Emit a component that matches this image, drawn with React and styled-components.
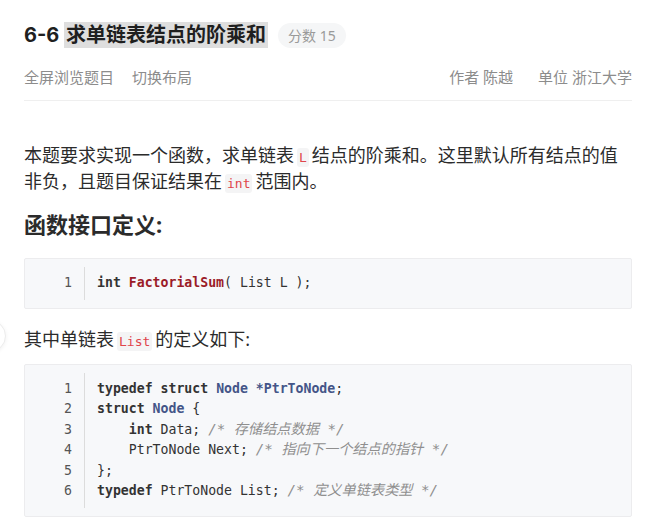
import React from "react";
import styled, { createGlobalStyle } from "styled-components";

const Global = createGlobalStyle`
  html, body { margin: 0; padding: 0; background: #fff; }
  body { font-family: "Noto Sans", "Noto Sans CJK SC", sans-serif; color: #333; }
`;

const Page = styled.div`
  position: relative;
  padding: 21px 28px 0 24px;
  width: 608px;
`;

const TitleRow = styled.div`
  display: flex;
  align-items: center;
  gap: 10px;
`;

const Title = styled.h1`
  margin: 0;
  font-size: 20px;
  line-height: 28px;
  font-weight: 700;
  color: #1f1f1f;
  font-family: Inter, "Noto Sans CJK SC", sans-serif;
`;

const Highlight = styled.span`
  background: #dedede;
  padding: 1px 2px;
`;

const Badge = styled.span`
  display: inline-flex;
  align-items: center;
  height: 25px;
  padding: 0 10px;
  border-radius: 13px;
  background: #f5f6f7;
  color: #9a9a9a;
  font-size: 14px;
`;

const SubNav = styled.div`
  display: flex;
  justify-content: space-between;
  align-items: center;
  margin-top: 17px;
  padding-bottom: 12px;
  border-bottom: 1px solid #efefef;
  font-size: 15px;
  line-height: 22px;
  color: #8c8c8c;
`;

const NavGroup = styled.div`
  display: flex;
  gap: ${(p) => p.$gap}px;
`;

const Para = styled.p`
  margin: ${(p) => p.$mt}px 0 0;
  font-size: 18px;
  line-height: 26px;
  color: #2b2b2b;
`;

const Heading = styled.h2`
  margin: 14px 0 0;
  font-size: 22px;
  line-height: 32px;
  font-weight: 700;
  color: #2b2b2b;
`;

const InlineCode = styled.code`
  font-family: "DejaVu Sans Mono", "Liberation Mono", monospace;
  font-size: 13px;
  line-height: 1;
  color: #e0454b;
  background: #f4f4f5;
  padding: 2px 2px;
  margin: 0 3px;
  border-radius: 3px;
`;

const Block = styled.div`
  margin-top: ${(p) => p.$mt}px;
  display: flex;
  padding: 8px 0;
  background: #f7f8fa;
  border: 1px solid #ececee;
  border-radius: 2px;
  font-family: "DejaVu Sans Mono", "Liberation Mono", "Noto Sans CJK SC", monospace;
  font-size: 13.2px;
  line-height: 20.5px;
`;

const Gutter = styled.div`
  width: 47px;
  padding: 6px 12px 6px 0;
  text-align: right;
  color: #555;
  border-right: 1px solid #dcdcdc;
`;

const Lines = styled.div`
  padding: 6px 12px;
  color: #333;
  white-space: pre;
`;

const Line = styled.div`
  height: 20.5px;
  overflow: visible;
`;

const Tok = styled.span`
  font-weight: ${(p) => (p.$k === "kw" || p.$k === "fn" || p.$k === "type" ? 700 : 400)};
  color: ${(p) =>
    p.$k === "fn" ? "#9b1c28" : p.$k === "type" ? "#445588" : p.$k === "cm" ? "#8f8f8f" : "#333"};
  font-style: ${(p) => (p.$k === "cm" ? "italic" : "normal")};
  font-size: ${(p) => (p.$k === "cm" ? "14.2px" : "inherit")};
  line-height: ${(p) => (p.$k === "cm" ? "1" : "inherit")};
`;

const Floater = styled.div`
  position: absolute;
  left: -26px;
  top: 320px;
  width: 30px;
  height: 30px;
  border-radius: 50%;
  border: 1px solid #ececec;
  background: #fff;
  box-shadow: 0 1px 4px rgba(0, 0, 0, 0.06);
`;

function Code({ lines, mt }) {
  return (
    <Block $mt={mt}>
      <Gutter>
        {lines.map((_, i) => (
          <Line key={i}>{i + 1}</Line>
        ))}
      </Gutter>
      <Lines>
        {lines.map((toks, i) => (
          <Line key={i}>
            {toks.map(([k, t], j) => (
              <Tok key={j} $k={k}>
                {t}
              </Tok>
            ))}
          </Line>
        ))}
      </Lines>
    </Block>
  );
}

const iface = [[["kw", "int"], ["", " "], ["fn", "FactorialSum"], ["", "( List L );"]]];

const listDef = [
  [["kw", "typedef"], ["", " "], ["kw", "struct"], ["", " "], ["type", "Node"], ["", " "], ["type", "*PtrToNode"], ["", ";"]],
  [["kw", "struct"], ["", " "], ["type", "Node"], ["", " {"]],
  [["", "    "], ["kw", "int"], ["", " Data; "], ["cm", "/* 存储结点数据 */"]],
  [["", "    PtrToNode Next; "], ["cm", "/* 指向下一个结点的指针 */"]],
  [["", "};"]],
  [["kw", "typedef"], ["", " PtrToNode List; "], ["cm", "/* 定义单链表类型 */"]],
];

export default function App() {
  return (
    <>
      <Global />
      <Page>
        <TitleRow>
          <Title>
            6-6 <Highlight>求单链表结点的阶乘和</Highlight>
          </Title>
          <Badge>分数 15</Badge>
        </TitleRow>
        <SubNav>
          <NavGroup $gap={18}>
            <span>全屏浏览题目</span>
            <span>切换布局</span>
          </NavGroup>
          <NavGroup $gap={25}>
            <span>作者 陈越</span>
            <span>单位 浙江大学</span>
          </NavGroup>
        </SubNav>
        <Para $mt={41}>
          本题要求实现一个函数，求单链表<InlineCode>L</InlineCode>结点的阶乘和。这里默认所有结点的值非负，且题目保证结果在
          <InlineCode>int</InlineCode>范围内。
        </Para>
        <Heading>函数接口定义:</Heading>
        <Code lines={iface} mt={18} />
        <Para $mt={17}>
          其中单链表<InlineCode>List</InlineCode>的定义如下:
        </Para>
        <Code lines={listDef} mt={12} />
        <Floater />
      </Page>
    </>
  );
}
